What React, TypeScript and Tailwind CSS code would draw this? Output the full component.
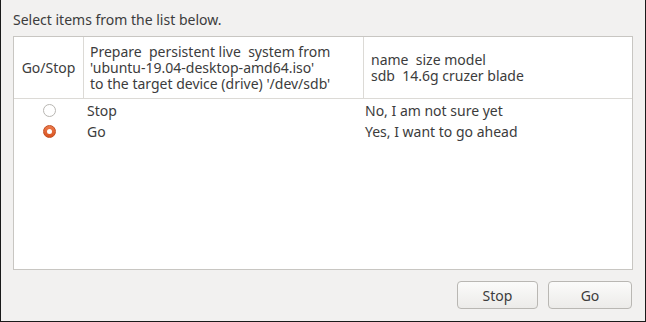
const font = { fontFamily: '"Noto Sans", "DejaVu Sans", sans-serif' };

function Radio({ checked }: { checked?: boolean }) {
  if (checked) {
    return (
      <span className="flex h-[13px] w-[13px] items-center justify-center rounded-full border border-[#c24e22] bg-gradient-to-b from-[#ec7a4c] to-[#d9531e]">
        <span className="h-[5px] w-[5px] rounded-full bg-white" />
      </span>
    );
  }
  return <span className="h-[13px] w-[13px] rounded-full border border-[#b8b6b2] bg-white" />;
}

const rows = [
  { action: "Stop", note: "No, I am not sure yet", checked: false },
  { action: "Go", note: "Yes, I want to go ahead", checked: true },
];

export default function App() {
  return (
    <div
      style={font}
      className="flex h-[322px] w-[646px] flex-col border-x border-b border-[#1a1a1a] bg-[#f2f1f0] text-[14px] text-[#3c3c3c]"
    >
      <div className="pl-[12px] pt-[10px] leading-[20px]">Select items from the list below.</div>
      <div className="ml-[12px] mt-[6px] flex h-[234px] w-[620px] flex-col border border-[#c8c6c2] bg-white">
        <div className="flex h-[62px] border-b border-[#dcdad6]">
          <div className="flex w-[70px] items-center justify-center border-r border-[#dcdad6]">Go/Stop</div>
          <div className="flex w-[280px] flex-col justify-center whitespace-pre border-r border-[#dcdad6] pl-[6px] leading-[16px]">
            <span>Prepare  persistent live  system from</span>
            <span>'ubuntu-19.04-desktop-amd64.iso'</span>
            <span>to the target device (drive) '/dev/sdb'</span>
          </div>
          <div className="flex flex-1 flex-col justify-center whitespace-pre pl-[7px] leading-[16px]">
            <span>name  size model</span>
            <span>sdb  14.6g cruzer blade</span>
          </div>
        </div>
        <div className="pt-[1px]">
          {rows.map((r) => (
            <div key={r.action} className="flex h-[21px] items-center">
              <div className="flex w-[70px] justify-center">
                <Radio checked={r.checked} />
              </div>
              <div className="w-[280px] pl-[3px]">{r.action}</div>
              <div className="pl-[1px]">{r.note}</div>
            </div>
          ))}
        </div>
      </div>
      <div className="mr-[13px] mt-[11px] flex justify-end gap-[10px]">
        <button className="h-[28px] w-[81px] rounded-[4px] border border-[#b9b7b3] bg-gradient-to-b from-[#fbfbfa] to-[#ecebe9] text-[#3c3c3c]">
          Stop
        </button>
        <button className="h-[28px] w-[84px] rounded-[4px] border border-[#b9b7b3] bg-gradient-to-b from-[#fbfbfa] to-[#ecebe9] text-[#3c3c3c]">
          Go
        </button>
      </div>
    </div>
  );
}
